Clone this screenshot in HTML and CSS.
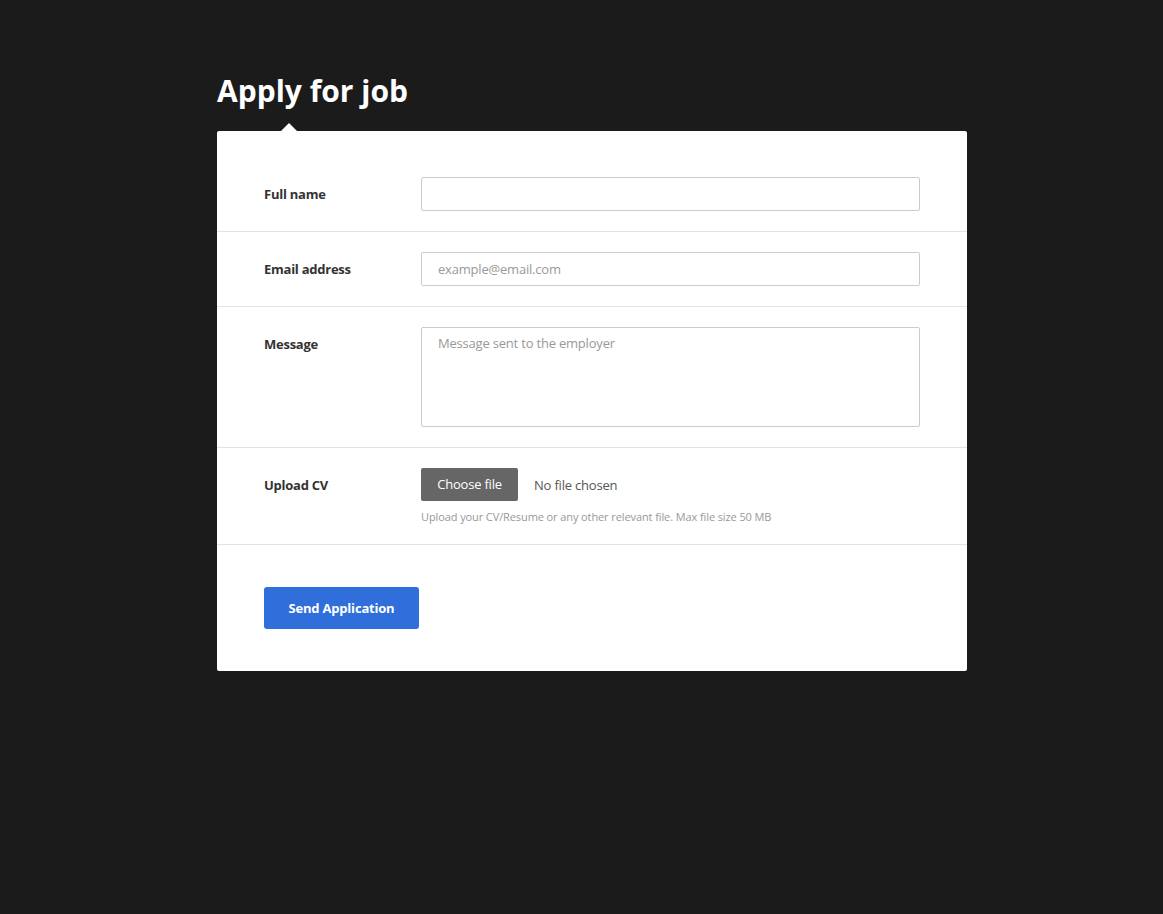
FILE: index.html
```html
<!DOCTYPE html>
<html lang="en">
<head>
    <meta charset="UTF-8">
    <meta name="viewport" content="width=device-width, initial-scale=1.0">
    <title>Apply for job</title>
    <link rel="stylesheet" href="styles.css">
</head>
<body>
    <div class="page">
        <h1 class="page-title">Apply for job</h1>
        <form class="apply-card" id="apply" method="POST">
            <div class="form-row">
                <label class="form-label" for="fullname">Full name</label>
                <div class="form-field">
                    <input class="form-input" type="text" id="fullname" name="fullname">
                </div>
            </div>
            <div class="form-row">
                <label class="form-label" for="email">Email address</label>
                <div class="form-field">
                    <input class="form-input" type="email" id="email" name="email" placeholder="example@email.com">
                </div>
            </div>
            <div class="form-row row-top">
                <label class="form-label label-top" for="message">Message</label>
                <div class="form-field">
                    <textarea class="form-input form-textarea" id="message" name="message" placeholder="Message sent to the employer"></textarea>
                </div>
            </div>
            <div class="form-row row-top">
                <label class="form-label label-top" for="cv">Upload CV</label>
                <div class="form-field">
                    <div class="file-line">
                        <label class="file-btn" for="cv">Choose file</label>
                        <input class="file-input" type="file" id="cv" name="cv">
                        <span class="file-name">No file chosen</span>
                    </div>
                    <p class="file-help">Upload your CV/Resume or any other relevant file. Max file size 50 MB</p>
                </div>
            </div>
            <div class="form-actions">
                <button class="btn-send" type="submit">Send Application</button>
            </div>
        </form>
    </div>
</body>
</html>
```

FILE: styles.css
```css
*{margin:0;padding:0;box-sizing:border-box;}
body{background:#1b1b1b;font-family:"Open Sans",Arial,sans-serif;color:#333;}
.page{width:750px;margin:0 0 0 217px;padding-top:71px;}
.page-title{color:#fff;font-size:30px;font-weight:700;line-height:40px;margin-bottom:20px;}
.apply-card{position:relative;background:#fff;border-radius:2px;padding-top:26px;}
.apply-card::before{content:"";position:absolute;left:64px;top:-8px;border-left:8px solid transparent;border-right:8px solid transparent;border-bottom:8px solid #fff;}
.form-row{display:flex;align-items:center;padding:20px 47px;border-bottom:1px solid #e3e3e3;}
.row-top{align-items:flex-start;}
.form-label{width:157px;flex-shrink:0;font-size:13px;font-weight:700;color:#333;letter-spacing:-0.25px;}
.label-top{padding-top:8px;}
.form-field{flex:1;}
.form-input{display:block;width:100%;height:34px;border:1px solid #ccc;border-radius:2px;padding:0 16px;font-family:inherit;font-size:13px;color:#333;outline:none;letter-spacing:-0.2px;}
.form-input::placeholder{color:#999;}
.form-textarea{height:100px;padding:6px 16px;resize:none;line-height:18px;}
.file-line{display:flex;align-items:center;gap:16px;}
.file-btn{display:inline-block;width:97px;height:33px;line-height:32px;text-align:center;background:#666;color:#fff;font-size:13px;border-radius:2px;cursor:pointer;letter-spacing:-0.2px;}
.file-input{display:none;}
.file-name{font-size:13px;color:#555;letter-spacing:-0.2px;}
.file-help{font-size:11px;color:#999;margin-top:8px;letter-spacing:-0.1px;}
.form-actions{padding:42px 47px;}
.btn-send{width:155px;height:42px;border:0;border-radius:3px;background:#2f6edb;color:#fff;font-family:inherit;font-size:13px;font-weight:700;cursor:pointer;letter-spacing:-0.2px;}
```
